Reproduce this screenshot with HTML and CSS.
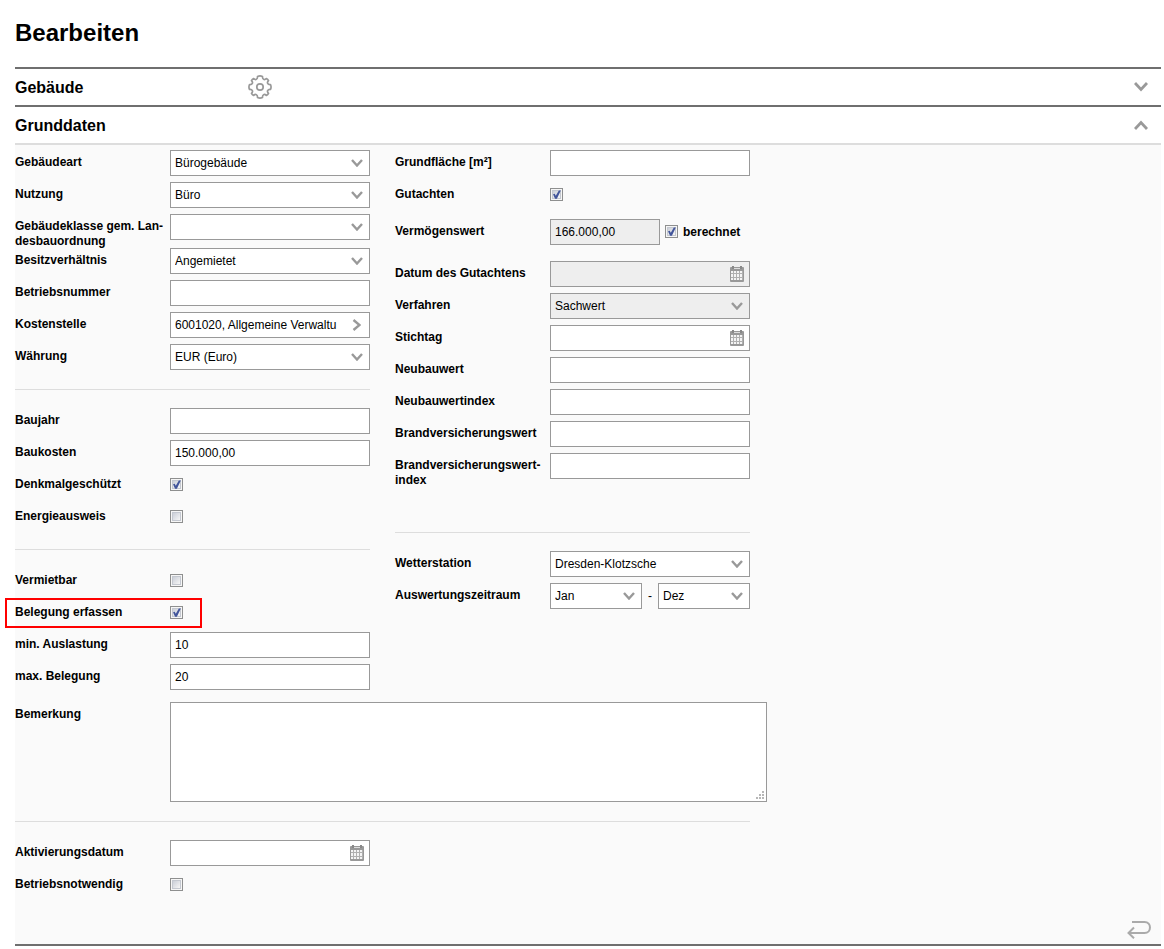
FILE: index.html
```html
<!DOCTYPE html>
<html lang="de">
<head>
<meta charset="utf-8">
<title>Bearbeiten</title>
<link rel="stylesheet" href="styles.css">
</head>
<body>
<svg class="defs" aria-hidden="true">
  <symbol id="down" viewBox="0 0 12 8"><path d="M1 1l5 5.500L11 1" fill="none" stroke="#999" stroke-width="2.400"/></symbol>
  <symbol id="right" viewBox="0 0 9 12"><path d="M1.500 1l6 5-6 5" fill="none" stroke="#999" stroke-width="2.400"/></symbol>
  <symbol id="cal" viewBox="0 0 14 16">
    <rect y="1" width="14" height="15" rx="1" fill="#999"/>
    <path d="M2 0h2v3H2zM10 0h2v3h-2z" fill="#888"/>
    <path d="M1 5h12v9H1z" fill="#f4f4f4"/>
    <path d="M4 2h6v1H4z" fill="#ddd"/>
    <path d="M3.500 5v9M6.500 5v9M9.500 5v9M12.500 5v9M1 7.500h12M1 11.500h12" stroke="#b0b0b0" stroke-width="1"/>
  </symbol>
</svg>
<main class="page">
  <h1 class="title">Bearbeiten</h1>

  <header class="section-head">
    <h2 class="section-title">Gebäude</h2>
    <button class="icon-button" type="button" aria-label="Einstellungen">
      <svg width="24" height="24" viewBox="0 0 24 24" fill="none" stroke="#999" stroke-width="1.700" stroke-linejoin="round"><path d="M22.500 9.500Q23.600 12 22.500 14.500C19.500 14.200 18.600 16.500 20.500 18.300Q19.800 19.800 18.300 20.500C16.500 18.600 14.200 19.500 14.500 22.500Q12 23.600 9.500 22.500C9.800 19.500 7.500 18.600 5.700 20.500Q4.200 19.800 3.500 18.300C5.400 16.500 4.500 14.200 1.500 14.500Q.4 12 1.500 9.500C4.500 9.800 5.400 7.500 3.500 5.700Q4.200 4.200 5.700 3.500C7.500 5.400 9.800 4.500 9.500 1.500Q12 .4 14.500 1.500C14.200 4.500 16.500 5.400 18.300 3.500Q19.800 4.200 20.500 5.700C18.600 7.500 19.500 9.800 22.500 9.500Z"/><circle cx="12" cy="12" r="3.200"/></svg>
    </button>
    <button class="icon-button toggle" type="button" aria-label="Gebäude öffnen">
      <svg width="14" height="10" viewBox="0 0 14 10" fill="none" stroke="#999" stroke-width="2.800"><path d="M1 1l6 6.500L13 1"/></svg>
    </button>
  </header>

  <header class="section-head open">
    <h2 class="section-title">Grunddaten</h2>
    <button class="icon-button toggle" type="button" aria-label="Grunddaten schließen">
      <svg width="14" height="10" viewBox="0 0 14 10" fill="none" stroke="#999" stroke-width="2.800"><path d="M1 9l6-6.500L13 9"/></svg>
    </button>
  </header>

  <form class="section-body">
    <div class="columns">
      <div class="column">
        <div class="row"><label class="label" for="art">Gebäudeart</label><span class="control"><select class="field" id="art"><option>Bürogebäude</option></select><svg class="arrow"><use href="#down"/></svg></span></div>
        <div class="row"><label class="label" for="nutzung">Nutzung</label><span class="control"><select class="field" id="nutzung"><option>Büro</option></select><svg class="arrow"><use href="#down"/></svg></span></div>
        <div class="row"><label class="label" for="klasse">Gebäudeklasse gem. Lan-<br>desbauordnung</label><span class="control"><select class="field" id="klasse"><option></option></select><svg class="arrow"><use href="#down"/></svg></span></div>
        <div class="row"><label class="label" for="besitz">Besitzverhältnis</label><span class="control"><select class="field" id="besitz"><option>Angemietet</option></select><svg class="arrow"><use href="#down"/></svg></span></div>
        <div class="row"><label class="label" for="nummer">Betriebsnummer</label><span class="control"><input class="field" id="nummer" type="text"></span></div>
        <div class="row"><label class="label" for="kosten">Kostenstelle</label><span class="control"><input class="field picker" id="kosten" type="text" value="6001020, Allgemeine Verwaltu"><button class="pick" type="button" aria-label="Kostenstelle wählen"><svg width="9" height="12"><use href="#right"/></svg></button></span></div>
        <div class="row"><label class="label" for="waehrung">Währung</label><span class="control"><select class="field" id="waehrung"><option>EUR (Euro)</option></select><svg class="arrow"><use href="#down"/></svg></span></div>
        <hr class="rule">
        <div class="row"><label class="label" for="baujahr">Baujahr</label><span class="control"><input class="field" id="baujahr" type="text"></span></div>
        <div class="row"><label class="label" for="baukosten">Baukosten</label><span class="control"><input class="field" id="baukosten" type="text" value="150.000,00"></span></div>
        <div class="row"><label class="label" for="denkmal">Denkmalgeschützt</label><input class="check" id="denkmal" type="checkbox" checked></div>
        <div class="row"><label class="label" for="energie">Energieausweis</label><input class="check" id="energie" type="checkbox"></div>
        <hr class="rule">
        <div class="row"><label class="label" for="vermietbar">Vermietbar</label><input class="check" id="vermietbar" type="checkbox"></div>
        <div class="row marked"><label class="label" for="belegung">Belegung erfassen</label><input class="check" id="belegung" type="checkbox" checked></div>
        <div class="row"><label class="label" for="min">min. Auslastung</label><span class="control"><input class="field" id="min" type="text" value="10"></span></div>
        <div class="row"><label class="label" for="max">max. Belegung</label><span class="control"><input class="field" id="max" type="text" value="20"></span></div>
      </div>

      <div class="column">
        <div class="row"><label class="label" for="flaeche">Grundfläche [m²]</label><span class="control"><input class="field" id="flaeche" type="text"></span></div>
        <div class="row"><label class="label" for="gutachten">Gutachten</label><input class="check" id="gutachten" type="checkbox" checked></div>
        <div class="row spaced"><label class="label" for="wert">Vermögenswert</label><span class="control narrow"><input class="field" id="wert" type="text" value="166.000,00" disabled></span><input class="check" id="berechnet" type="checkbox" checked><label class="label side" for="berechnet">berechnet</label></div>
        <div class="row"><label class="label" for="datum">Datum des Gutachtens</label><span class="control"><input class="field" id="datum" type="text" disabled><svg class="calendar"><use href="#cal"/></svg></span></div>
        <div class="row"><label class="label" for="verfahren">Verfahren</label><span class="control"><select class="field" id="verfahren" disabled><option>Sachwert</option></select><svg class="arrow"><use href="#down"/></svg></span></div>
        <div class="row"><label class="label" for="stichtag">Stichtag</label><span class="control"><input class="field" id="stichtag" type="text"><svg class="calendar"><use href="#cal"/></svg></span></div>
        <div class="row"><label class="label" for="neubau">Neubauwert</label><span class="control"><input class="field" id="neubau" type="text"></span></div>
        <div class="row"><label class="label" for="neuindex">Neubauwertindex</label><span class="control"><input class="field" id="neuindex" type="text"></span></div>
        <div class="row"><label class="label" for="brand">Brandversicherungswert</label><span class="control"><input class="field" id="brand" type="text"></span></div>
        <div class="row"><label class="label" for="brandindex">Brandversicherungswert-<br>index</label><span class="control"><input class="field" id="brandindex" type="text"></span></div>
        <hr class="rule far">
        <div class="row"><label class="label" for="wetter">Wetterstation</label><span class="control"><select class="field" id="wetter"><option>Dresden-Klotzsche</option></select><svg class="arrow"><use href="#down"/></svg></span></div>
        <div class="row"><label class="label" for="von">Auswertungszeitraum</label><span class="range"><span class="control"><select class="field" id="von"><option>Jan</option></select><svg class="arrow"><use href="#down"/></svg></span><span class="dash">-</span><span class="control"><select class="field" id="bis" aria-label="Auswertungszeitraum bis"><option>Dez</option></select><svg class="arrow"><use href="#down"/></svg></span></span></div>
      </div>
    </div>

    <div class="row note-row"><label class="label" for="bemerkung">Bemerkung</label><span class="note"><textarea class="area" id="bemerkung"></textarea><svg class="grip" width="8" height="8" fill="#999"><path d="M6 0h2v2H6zM3 3h2v2H3zM6 3h2v2H6zM0 6h2v2H0zM3 6h2v2H3zM6 6h2v2H6z" opacity=".7"/></svg></span></div>
    <hr class="rule wide">
    <div class="column">
      <div class="row"><label class="label" for="aktiv">Aktivierungsdatum</label><span class="control"><input class="field" id="aktiv" type="text"><svg class="calendar"><use href="#cal"/></svg></span></div>
      <div class="row"><label class="label" for="notwendig">Betriebsnotwendig</label><input class="check" id="notwendig" type="checkbox"></div>
    </div>
    <footer class="actions">
      <button class="icon-button" type="button" aria-label="Zurück">
        <svg width="24" height="18" viewBox="0 0 24 18" fill="none" stroke="#aaa" stroke-width="2"><path d="M5 1h12.500c7.300 0 7.300 11 0 11H1.500M7 6.500L1.500 12 7 17.300"/></svg>
      </button>
    </footer>
  </form>
</main>
</body>
</html>
```
FILE: styles.css
```css
*,
*::before,
*::after { box-sizing: border-box; }

body {
  margin: 0;
  background: #fff;
  color: #000;
  font-family: "Liberation Sans", Arial, sans-serif;
  font-size: 12px;
  line-height: 15px;
}

.defs { display: none; }

.page { padding: 18px 3px 0 15px; }

.title {
  margin: 0 0 19px;
  font-size: 24px;
  line-height: 30px;
}

.section-head {
  display: flex;
  align-items: center;
  height: 38px;
  padding-right: 13px;
  border-top: 2px solid #6f6f6f;
}

.section-head.open {
  height: 40px;
  border-bottom: 2px solid #ddd;
}

.section-title {
  width: 233px;
  margin: 0;
  padding-top: 2px;
  font-size: 16px;
  line-height: 20px;
}

.icon-button,
.pick {
  display: flex;
  padding: 0;
  border: 0;
  background: none;
}

.toggle { margin-left: auto; }

.section-body {
  padding-top: 5px;
  border-bottom: 2px solid #6f6f6f;
  background: #fafafa;
}

.columns {
  display: flex;
  gap: 25px;
}

.column { width: 355px; }

.row {
  display: flex;
  align-items: flex-start;
  min-height: 32px;
}

.row.spaced {
  margin: 5px 0 10px;
}

.label {
  flex: none;
  width: 155px;
  margin-bottom: -1px;
  padding-top: 5px;
  font-weight: bold;
  white-space: nowrap;
}

.label.side {
  width: auto;
  padding: 6px 0 0 5px;
}

.control {
  position: relative;
  flex: 1;
  min-width: 0;
}

.control.narrow {
  flex: none;
  width: 110px;
  margin-right: 5px;
}

.field {
  display: block;
  width: 100%;
  height: 26px;
  margin: 0;
  padding: 0 4px;
  border: 1px solid #999;
  border-radius: 0;
  background: #fff;
  color: #000;
  font: inherit;
  appearance: none;
}

.field:disabled {
  background: #eee;
  color: #000;
  opacity: 1;
}

.field.picker { padding-right: 27px; }

.arrow {
  position: absolute;
  top: 9px;
  right: 7px;
  width: 12px;
  height: 8px;
  pointer-events: none;
}

.calendar {
  position: absolute;
  top: 5px;
  right: 6px;
  width: 14px;
  height: 16px;
}

.pick {
  position: absolute;
  top: 7px;
  right: 9px;
}

.check {
  flex: none;
  width: 13px;
  height: 13px;
  margin: 6px 0 0;
  border: 1px solid #8e8f8f;
  outline: 1px solid #c4c8d0;
  outline-offset: -3px;
  background: linear-gradient(135deg, #cbcfd8, #f6f6f6) content-box, #f6f6f6;
  padding: 2px;
  appearance: none;
}

.check:checked::before {
  content: "";
  display: block;
  width: 9px;
  height: 9px;
  margin: -1px;
  background: #42559b;
  clip-path: polygon(12% 48%, 30% 42%, 42% 64%, 76% 6%, 98% 6%, 54% 96%, 34% 96%);
}

.range {
  display: flex;
  flex: 1;
}

.dash {
  width: 16px;
  padding-top: 6px;
  text-align: center;
}

.marked { position: relative; }

.marked::after {
  content: "";
  position: absolute;
  top: -2px;
  left: -10px;
  width: 197px;
  height: 30px;
  border: 2px solid #f00;
  pointer-events: none;
}

.rule {
  height: 1px;
  margin: 13px 0 18px;
  border: 0;
  background: #ddd;
}

.rule.far { margin-top: 45px; }

.rule.wide {
  width: 735px;
  margin-top: 19px;
}

.note-row { margin-top: 6px; }

.note { position: relative; }

.area {
  display: block;
  width: 597px;
  height: 100px;
  padding: 4px;
  border: 1px solid #999;
  background: #fff;
  font: inherit;
  resize: none;
}

.grip {
  position: absolute;
  right: 3px;
  bottom: 3px;
}

.actions {
  display: flex;
  justify-content: flex-end;
  padding: 17px 10px 5px;
}
```
